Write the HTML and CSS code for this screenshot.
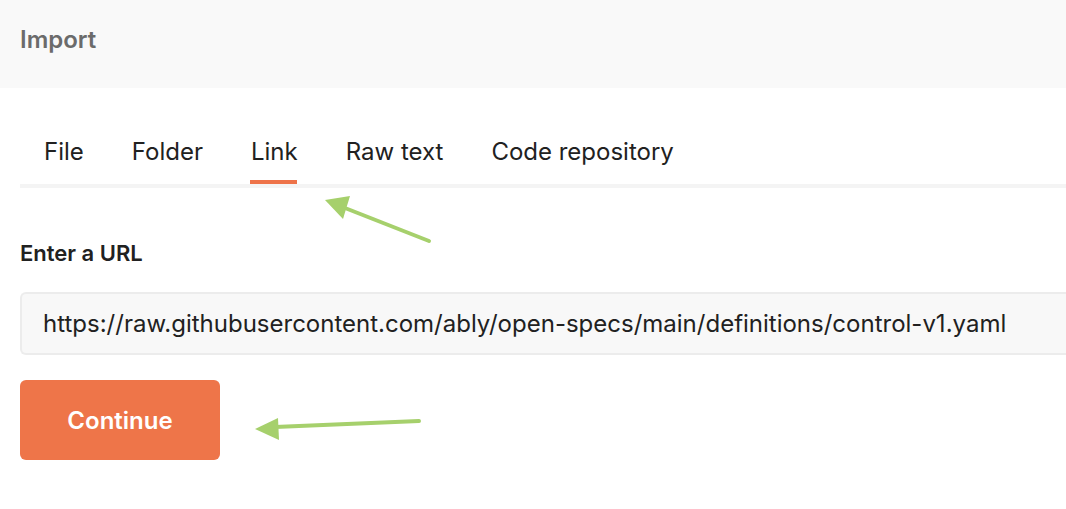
FILE: index.html
```html
<!DOCTYPE html>
<html>
<head>
<meta charset="utf-8">
<link rel="stylesheet" href="styles.css">
</head>
<body>
<div class="page">
  <header class="header">Import</header>
  <main class="content">
    <nav class="tabs">
      <span class="tab">File</span>
      <span class="tab">Folder</span>
      <span class="tab active">Link</span>
      <span class="tab">Raw text</span>
      <span class="tab">Code repository</span>
    </nav>
    <label class="label">Enter a URL</label>
    <div class="input">https://raw.githubusercontent.com/ably/open-specs/main/definitions/control-v1.yaml</div>
    <button class="btn">Continue</button>
  </main>
  <svg class="arrows" width="1066" height="509" viewBox="0 0 1066 509">
    <g stroke="#a6d06c" stroke-width="4" stroke-linecap="round" fill="#a6d06c">
      <line x1="429" y1="241" x2="345" y2="208"/>
      <polygon points="325,200 350,196 343,219" stroke="none"/>
      <line x1="419" y1="421" x2="275" y2="427"/>
      <polygon points="255,429 278,418 279,440" stroke="none"/>
    </g>
  </svg>
</div>
</body>
</html>
```
FILE: styles.css
```css
* { box-sizing: border-box; }
html, body { margin: 0; padding: 0; background: #fff; }
body { font-family: Inter, "Noto Sans", sans-serif; color: #212121; }
.page { position: relative; width: 1066px; height: 509px; overflow: hidden; }
.header {
  height: 88px;
  background: #f9f9f9;
  padding: 26px 20px 0;
  font-size: 24px;
  font-weight: 600;
  color: #6b6b6b;
  line-height: 28px;
}
.content { padding: 0 0 0 20px; }
.tabs {
  display: flex;
  margin-top: 38px;
  border-bottom: 4px solid #f4f4f4;
}
.tab {
  padding: 11px 24px 0;
  height: 58px;
  font-size: 24px;
  line-height: 30px;
  color: #212121;
  position: relative;
}
.tab.active::after {
  content: "";
  position: absolute;
  left: 23px; right: 25px; bottom: 0;
  height: 4px;
  background: #ee7349;
}
.label {
  display: block;
  margin-top: 52px;
  font-size: 22px;
  font-weight: 600;
  line-height: 26px;
  color: #212121;
}
.input {
  margin-top: 26px;
  height: 63px;
  background: #f8f8f8;
  border: 2px solid #ececec;
  border-right: none;
  border-radius: 6px 0 0 6px;
  padding: 0 0 0 21px;
  display: flex;
  align-items: center;
  font-size: 24px;
  color: #212121;
  white-space: nowrap;
}
.btn {
  margin-top: 25px;
  width: 200px;
  height: 80px;
  background: #ee7549;
  border: none;
  border-radius: 6px;
  color: #fff;
  font-family: Inter, "Noto Sans", sans-serif;
  font-size: 24px;
  font-weight: 600;
  display: block;
}
.arrows { position: absolute; left: 0; top: 0; pointer-events: none; }
```
